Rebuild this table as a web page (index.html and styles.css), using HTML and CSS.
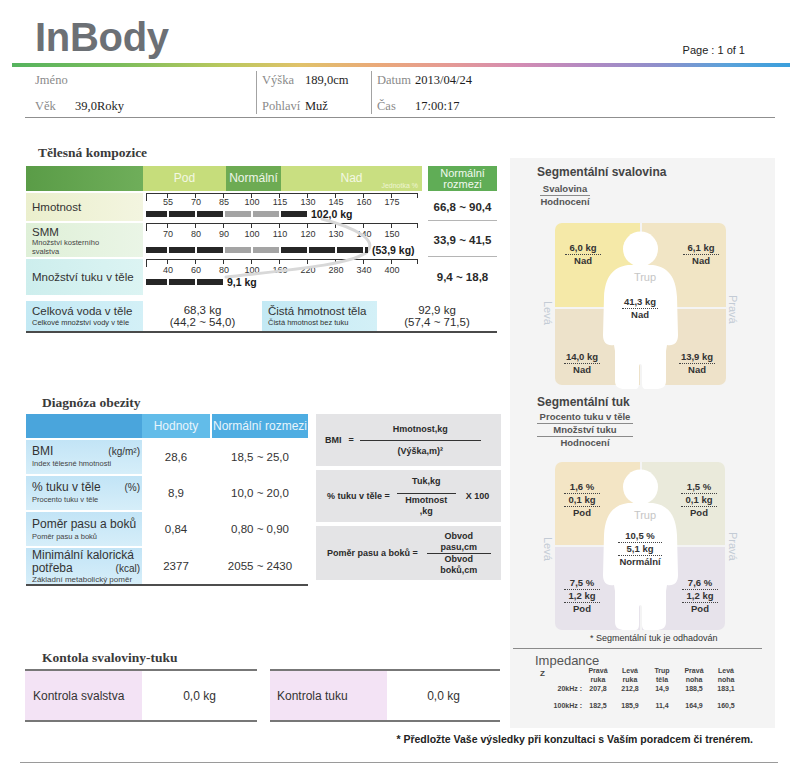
FILE: index.html
```html
<!DOCTYPE html>
<html lang="cs">
<head>
<meta charset="utf-8">
<title>InBody</title>
<link rel="stylesheet" href="styles.css">
</head>
<body>
<div class="page">
  <header class="top">
    <div class="logo">InBody</div>
    <div class="pageno">Page : 1 of 1</div>
  </header>
  <div class="rainbow"></div>
  <div class="info">
    <div class="icol c1">
      <div class="irow"><span class="lab">Jméno</span><span class="val"></span></div>
      <div class="irow"><span class="lab">Věk</span><span class="val">39,0Roky</span></div>
    </div>
    <div class="isep"></div>
    <div class="icol c2">
      <div class="irow"><span class="lab">Výška</span><span class="val">189,0cm</span></div>
      <div class="irow"><span class="lab">Pohlaví</span><span class="val">Muž</span></div>
    </div>
    <div class="isep"></div>
    <div class="icol c3">
      <div class="irow"><span class="lab">Datum</span><span class="val">2013/04/24</span></div>
      <div class="irow"><span class="lab">Čas</span><span class="val">17:00:17</span></div>
    </div>
  </div>

  <div class="main">
    <div class="left">
      <h2 class="stitle t1">Tělesná kompozice</h2>
      <div class="bc">
        <div class="bc-h0"></div>
        <div class="bc-hs">
          <div class="hs-pod">Pod</div>
          <div class="hs-norm">Normální</div>
          <div class="hs-nad">Nad<span class="unit">Jednotka %</span></div>
        </div>
        <div class="bc-hr">Normální<br>rozmezi</div>

        <div class="bl l1"><div class="bl-main">Hmotnost</div></div>
        <div class="scale r1">
          <div class="ticks"><span>55</span><span>70</span><span>85</span><span>100</span><span>115</span><span>130</span><span>145</span><span>160</span><span>175</span></div>
          <div class="barrow"><i class="seg"></i><i class="seg"></i><i class="seg"></i><i class="seg g"></i><i class="seg g"></i><i class="seg"></i><span class="bval">102,0 kg</span></div>
        </div>
        <div class="rng rb">66,8 ~ 90,4</div>

        <div class="bl l2"><div class="bl-main smm">SMM</div><div class="bl-sub">Množství kosterního<br>svalstva</div></div>
        <div class="scale r2">
          <div class="ticks"><span>70</span><span>80</span><span>90</span><span>100</span><span>110</span><span>120</span><span>130</span><span>140</span><span>150</span></div>
          <div class="barrow"><i class="seg"></i><i class="seg"></i><i class="seg"></i><i class="seg g"></i><i class="seg g"></i><i class="seg"></i><i class="seg"></i><i class="seg"></i><i class="seg s"></i><span class="bval">(53,9 kg)</span></div>
        </div>
        <div class="rng rb">33,9 ~ 41,5</div>

        <div class="bl l3"><div class="bl-main">Množství tuku v těle</div></div>
        <div class="scale r3">
          <div class="ticks"><span>40</span><span>60</span><span>80</span><span>100</span><span>160</span><span>220</span><span>280</span><span>340</span><span>400</span></div>
          <div class="barrow"><i class="seg"></i><i class="seg"></i><i class="seg"></i><span class="bval">9,1 kg</span></div>
        </div>
        <div class="rng">9,4 ~ 18,8</div>

        <svg class="stroke" width="471" height="129" viewBox="0 0 471 129"><path d="M296 53 C330 62 352 74 341 86 C325 99 262 104 200 111" fill="none" stroke="#d8d8d8" stroke-width="3" stroke-linecap="round"/></svg>
      </div>

      <div class="bcw">
        <div class="wl"><div class="wl-main">Celková voda v těle</div><div class="wl-sub">Celkové množství vody v těle</div></div>
        <div class="wv"><span>68,3 kg</span><span>(44,2 ~ 54,0)</span></div>
        <div class="wl"><div class="wl-main">Čistá hmotnost těla</div><div class="wl-sub">Čistá hmotnost bez tuku</div></div>
        <div class="wv"><span>92,9 kg</span><span>(57,4 ~ 71,5)</span></div>
      </div>

      <h2 class="stitle t2">Diagnóza obezity</h2>
      <div class="diag">
        <div class="dt">
          <div class="dh0"></div>
          <div class="dh1">Hodnoty</div>
          <div class="dh2">Normální rozmezi</div>

          <div class="dl p4"><div class="dl-main"><span>BMI</span><span class="unitx">(kg/m²)</span></div><div class="dl-sub">Index tělesné hmotnosti</div></div>
          <div class="dv">28,6</div>
          <div class="dv dv2">18,5 ~ 25,0</div>

          <div class="dl p4"><div class="dl-main"><span>% tuku v těle</span><span class="unitx">(%)</span></div><div class="dl-sub">Procento tuku v těle</div></div>
          <div class="dv">8,9</div>
          <div class="dv dv2">10,0 ~ 20,0</div>

          <div class="dl p5"><div class="dl-main"><span>Poměr pasu a boků</span></div><div class="dl-sub">Poměr pasu a boků</div></div>
          <div class="dv">0,84</div>
          <div class="dv dv2">0,80 ~ 0,90</div>

          <div class="dl p1"><div class="dl-main tight"><span>Minimální kalorická</span></div><div class="dl-main tight"><span>potřeba</span><span class="unitx">(kcal)</span></div><div class="dl-sub cut">Základní metabolický poměr</div></div>
          <div class="dv">2377</div>
          <div class="dv dv2">2055 ~ 2430</div>
        </div>

        <div class="fm">
          <div class="fbox f1">
            <span>BMI</span><span class="eq">=</span>
            <div class="frac fr1"><span class="num">Hmotnost,kg</span><span class="den">(Výška,m)²</span></div>
          </div>
          <div class="fbox f2">
            <span>% tuku v těle =</span>
            <div class="frac fr2"><span class="num">Tuk,kg</span><span class="den">Hmotnost<br>,kg</span></div>
            <span class="x100">X 100</span>
          </div>
          <div class="fbox f3">
            <span>Poměr pasu a boků =</span>
            <div class="frac fr3"><span class="num">Obvod<br>pasu,cm</span><span class="den">Obvod<br>boků,cm</span></div>
          </div>
        </div>
      </div>

      <h2 class="stitle t3">Kontola svaloviny-tuku</h2>
      <div class="kc">
        <div class="kbox k1"><div class="klab">Kontrola svalstva</div><div class="kval">0,0 kg</div></div>
        <div class="kbox k2"><div class="klab">Kontrola tuku</div><div class="kval">0,0 kg</div></div>
      </div>
    </div>

    <aside class="right">
      <h3 class="sg-title">Segmentální svalovina</h3>
      <div class="leg leg1"><span class="ul">Svalovina</span><span>Hodnocení</span></div>

      <div class="quad qm">
        <div class="q tl"><div class="ql"><span class="u">6,0 kg</span><span>Nad</span></div></div>
        <div class="q tr"><div class="ql"><span class="u">6,1 kg</span><span>Nad</span></div></div>
        <div class="q bl"><div class="ql"><span class="u">14,0 kg</span><span>Nad</span></div></div>
        <div class="q br"><div class="ql"><span class="u">13,9 kg</span><span>Nad</span></div></div>
        <svg class="fig" width="171" height="166" viewBox="0 0 171 166"><circle cx="85.5" cy="26" r="17.5" fill="#fff"/><path fill="#fff" d="M73 42 C58 44 50 54 49 74 L48 112 C48 120 52 123 59 122 L60 128 L60 158 C60 164 64 166 70 166 L80 166 C83 166 84 164 84 160 L84 144 C84 140 87 140 87 144 L87 160 C87 164 88 166 91 166 L101 166 C107 166 111 164 111 158 L111 128 L112 122 C119 123 123 120 123 112 L122 74 C121 54 113 44 98 42 Z"/></svg>
        <div class="trup tm">Trup</div>
        <div class="ql qc qcm"><span class="u">41,3 kg</span><span>Nad</span></div>
        <div class="side sl slm">Levá</div>
        <div class="side sr srm">Pravá</div>
      </div>

      <h3 class="sg-title t-fat">Segmentální tuk</h3>
      <div class="leg leg2"><span class="ul">Procento tuku v těle</span><span class="ul">Množství tuku</span><span>Hodnocení</span></div>

      <div class="quad qf">
        <div class="q tl"><div class="ql"><span class="u">1,6 %</span><span class="u">0,1 kg</span><span>Pod</span></div></div>
        <div class="q tr"><div class="ql"><span class="u">1,5 %</span><span class="u">0,1 kg</span><span>Pod</span></div></div>
        <div class="q bl"><div class="ql"><span class="u">7,5 %</span><span class="u">1,2 kg</span><span>Pod</span></div></div>
        <div class="q br"><div class="ql"><span class="u">7,6 %</span><span class="u">1,2 kg</span><span>Pod</span></div></div>
        <svg class="fig" width="171" height="168" viewBox="0 0 171 168"><circle cx="85.5" cy="25" r="17.5" fill="#fff"/><path fill="#fff" d="M73 41 C58 43 50 53 49 73 L48 113 C48 121 52 124 59 123 L60 129 L60 160 C60 166 64 168 70 168 L80 168 C83 168 84 166 84 162 L84 146 C84 142 87 142 87 146 L87 162 C87 166 88 168 91 168 L101 168 C107 168 111 166 111 160 L111 129 L112 123 C119 124 123 121 123 113 L122 73 C121 53 113 43 98 41 Z"/></svg>
        <div class="trup tf">Trup</div>
        <div class="ql qc qcf"><span class="u">10,5 %</span><span class="u">5,1 kg</span><span>Normální</span></div>
        <div class="side sl slf">Levá</div>
        <div class="side sr srf">Pravá</div>
      </div>

      <p class="note">* Segmentální tuk je odhadován</p>
      <div class="imp-hr"></div>
      <h3 class="imp-title">Impedance</h3>
      <div class="imp">
        <div class="iz">Z</div>
        <div>Pravá<br>ruka</div>
        <div>Levá<br>ruka</div>
        <div>Trup<br>těla</div>
        <div>Pravá<br>noha</div>
        <div>Levá<br>noha</div>

        <div class="ik a1">20kHz :</div>
        <div class="a1">207,8</div>
        <div class="a1">212,8</div>
        <div class="a1">14,9</div>
        <div class="a1">188,5</div>
        <div class="a1">183,1</div>

        <div class="ik a2">100kHz :</div>
        <div class="a2">182,5</div>
        <div class="a2">185,9</div>
        <div class="a2">11,4</div>
        <div class="a2">164,9</div>
        <div class="a2">160,5</div>
      </div>
    </aside>
  </div>

  <p class="foot">* Předložte Vaše výsledky při konzultaci s Vaším poradcem či trenérem.</p>
  <div class="endline"></div>
</div>
</body>
</html>
```

FILE: styles.css
```css
* { box-sizing: border-box; margin: 0; padding: 0; }
html, body { width: 800px; height: 784px; overflow: hidden; background: #fff; }
body { font-family: "Liberation Sans", Arial, sans-serif; color: #333; }
.page { position: relative; width: 800px; height: 784px; }

/* header */
.top { display: flex; justify-content: space-between; height: 63px; padding: 17px 55px 0 35px; }
.logo { font-size: 40px; line-height: 40px; font-weight: 700; color: #6c7075; letter-spacing: -0.3px; }
.pageno { font-size: 11px; line-height: 13px; margin-top: 27px; color: #222; }
.rainbow {
  height: 4px; margin: 0 10px 0 12px;
  background: linear-gradient(to right, #55b35e 0%, #7dbd5c 14%, #b9c85e 27%, #e0c26a 37%, #eaa979 47%, #e59a94 56%, #d48cb2 65%, #b289c2 74%, #8f8fcb 83%, #5aa2da 92%, #3a9fdc 100%);
}
.info {
  display: flex; height: 51px; margin: 0 25px; border-bottom: 1px solid #8f8f8f;
  font-family: "Liberation Serif", "Times New Roman", serif; font-size: 12.5px;
}
.icol { display: flex; flex-direction: column; gap: 4px; padding-top: 2px; }
.irow { display: flex; line-height: 22px; }
.lab { color: #8a8a8a; }
.val { color: #1e1e1e; }
.c1 { width: 231px; padding-left: 10px; }
.c1 .lab { width: 40px; }
.c2 { width: 114px; padding-left: 5px; }
.c2 .lab { width: 43px; }
.c3 { padding-left: 5px; }
.c3 .lab { width: 38px; }
.isep { width: 1px; background: #a3a3a3; margin: 4px 0 3px; }

/* main layout */
.main { display: flex; align-items: flex-start; gap: 8px; padding-left: 26px; }
.left { width: 476px; }
.stitle { font-family: "Liberation Serif", "Times New Roman", serif; font-weight: 700; font-size: 13.5px; line-height: 16px; color: #3a3a3a; }
.t1 { margin: 27px 0 5px 12px; }
.t2 { margin: 62px 0 3px 16px; }
.t3 { margin: 64px 0 3px 16px; }

/* body composition */
.bc {
  position: relative; display: grid; width: 471px;
  grid-template-columns: 117px 279px 75px; grid-template-rows: 25px 28px 34px 36px;
  row-gap: 2px;
}
.bc-h0 { background: linear-gradient(to right, #5a9c47, #6fae5a); }
.bc-hs { display: flex; color: #f3f8e3; font-size: 12px; line-height: 25px; text-align: center; }
.hs-pod { width: 83px; background: #c6dd7b; }
.hs-norm { width: 55px; background: #6dab53; color: #eef6e8; }
.hs-nad { flex: 1; position: relative; background: #c9df81; }
.unit { position: absolute; right: 4px; bottom: 1px; font-size: 7px; line-height: 9px; color: #eef5d2; }
.bc-hr { margin-left: 6px; background: #60ad56; color: #f2f9ef; font-size: 11px; line-height: 11px; text-align: center; padding-top: 2px; }

.bl { padding-left: 6px; overflow: hidden; }
.l1 { background: linear-gradient(to right, #ebefcd, #f3f5e0); display: flex; align-items: center; }
.l2 { background: linear-gradient(to right, #dff0d8, #eaf5e6); padding-top: 2px; }
.l3 { background: linear-gradient(to right, #cdeeed, #dcf4f3); display: flex; align-items: center; }
.bl-main { font-size: 11.5px; color: #333; }
.smm { line-height: 14px; }
.bl-sub { font-size: 7.5px; line-height: 8.5px; color: #444; }

.scale {
  position: relative; margin-left: 3px; width: 272px; border-top: 1px solid #333; padding-top: 3px;
  background-image: repeating-linear-gradient(to right, transparent 0, transparent 21px, #333 21px, #333 22px, transparent 22px, transparent 28px);
  background-size: 100% 4px; background-repeat: no-repeat;
}
.scale::before { content: ""; position: absolute; left: 0; top: 0; width: 1px; height: 7px; background: #333; }
.scale::after { content: ""; position: absolute; right: 0; top: 0; width: 1px; height: 4px; background: #333; }
.r2, .r3 { padding-top: 5px; }
.r2 .barrow { margin-top: 4px; }
.ticks { display: flex; padding-left: 8px; font-size: 9px; line-height: 11px; color: #333; }
.ticks span { width: 28px; text-align: center; }
.barrow { position: relative; z-index: 1; display: flex; align-items: center; gap: 2px; height: 12px; }
.seg { display: block; width: 26px; height: 6px; background: #262626; }
.seg:first-child { width: 21px; }
.seg.g { background: #a4a4a4; }
.seg.s { width: 3px; }
.bval { margin-left: 2px; font-size: 10.5px; font-weight: 700; line-height: 12px; color: #1a1a1a; white-space: nowrap; }
.rng { margin-left: 6px; display: flex; align-items: center; justify-content: center; font-size: 11.5px; font-weight: 700; color: #2a2a2a; }
.rb { border-bottom: 1px solid #b5b5b5; }
.stroke { position: absolute; left: 0; top: 0; pointer-events: none; }

.bcw { display: grid; grid-template-columns: 117px 119px 115px 120px; width: 471px; height: 32px; margin-top: 6px; border-bottom: 2px solid #4a4a4a; }
.wl { background: linear-gradient(to right, #c3e9f4, #d3f0f7); padding: 3px 0 0 6px; overflow: hidden; }
.wl-main { font-size: 11.5px; line-height: 14px; }
.wl-sub { font-size: 7.5px; line-height: 9px; white-space: nowrap; }
.wv { display: flex; flex-direction: column; justify-content: center; align-items: center; font-size: 11.5px; line-height: 12px; color: #2e2e2e; }

/* obesity diagnosis */
.diag { display: flex; gap: 8px; }
.dt {
  display: grid; width: 282px; grid-template-columns: 116px 68px 98px;
  grid-template-rows: 24px 34px 34px 34px 36px; row-gap: 2px; border-bottom: 2px solid #4d4d4d;
}
.dh0 { background: #4aa5dc; }
.dh1, .dh2 { color: #e8f5fc; font-size: 12px; line-height: 24px; text-align: center; }
.dh1 { background: #62bce9; }
.dh2 { background: #4eade2; border-left: 2px solid #fff; }
.dl { background: linear-gradient(to bottom, #c2e4f6, #d6eef9); padding: 4px 2px 0 6px; overflow: hidden; }
.p5 { padding-top: 5px; }
.p1 { padding-top: 1px; }
.dl-main { display: flex; justify-content: space-between; align-items: baseline; font-size: 12px; line-height: 15px; color: #333; }
.dl-main.tight { line-height: 13px; }
.unitx { font-size: 10px; }
.dl-sub { font-size: 7.5px; line-height: 9px; color: #444; white-space: nowrap; }
.dl-sub.cut { line-height: 10px; font-size: 8px; }
.dv { display: flex; align-items: center; justify-content: center; font-size: 11.5px; color: #333; }
.dv2 { padding-left: 2px; }

.fm { width: 185px; display: flex; flex-direction: column; gap: 4px; }
.fbox { display: flex; align-items: center; background: #e4e4e6; font-size: 9px; font-weight: 700; color: #2a2a2a; }
.f1 { height: 52px; padding-left: 9px; }
.f2 { height: 52px; padding-left: 11px; }
.f3 { height: 54px; padding-left: 11px; }
.eq { margin: 0 6px 0 7px; }
.frac { display: flex; flex-direction: column; text-align: center; line-height: 11px; }
.num { border-bottom: 1px solid #333; }
.fr1 { width: 121px; }
.fr1 .num { padding-bottom: 5px; }
.fr1 .den { padding-top: 5px; }
.fr2 { width: 59px; margin-left: 7px; }
.fr2 .num { padding-bottom: 6px; }
.fr2 .den { padding-top: 1px; }
.x100 { margin-left: 10px; }
.fr3 { width: 64px; margin-left: 9px; }

/* control */
.kc { display: flex; gap: 13px; margin-left: -1px; }
.kbox { height: 53px; border-top: 2px solid #777; border-bottom: 2px solid #777; display: grid; grid-template-columns: 117px 1fr; font-size: 12px; color: #333; }
.k1 { width: 232px; }
.k2 { width: 230px; }
.klab { display: flex; align-items: center; background: #f3e3f5; padding-left: 8px; }
.k2 .klab { padding-left: 7px; }
.kval { display: flex; align-items: center; justify-content: center; }

/* right panel */
.right { width: 265px; height: 570px; margin-top: 40px; background: #f4f4f4; padding-top: 6px; }
.sg-title { font-size: 12px; font-weight: 700; line-height: 16px; color: #444; padding-left: 27px; }
.t-fat { margin-top: 9px; }
.leg { font-size: 9.5px; font-weight: 700; line-height: 12px; text-align: center; color: #555; }
.leg span { display: block; }
.leg .ul { border-bottom: 1px solid #8a8a8a; }
.leg1 { width: 50px; margin: 3px 0 0 30px; }
.leg2 { width: 96px; margin: 1px 0 0 27px; }

.quad { position: relative; display: grid; column-gap: 2px; row-gap: 2px; margin-left: 45px; }
.qm { width: 171px; grid-template-columns: 85px 84px; grid-template-rows: 84px 76px; margin-top: 15px; }
.qf { width: 170px; grid-template-columns: 85px 83px; grid-template-rows: 83px 83px; margin-top: 13px; }
.q { display: flex; align-items: flex-start; }
.q.tl { border-top-left-radius: 7px; }
.q.tr { border-top-right-radius: 7px; justify-content: flex-end; }
.q.bl { border-bottom-left-radius: 7px; align-items: flex-end; }
.q.br { border-bottom-right-radius: 7px; align-items: flex-end; justify-content: flex-end; }
.qm .tl { background: #f5e9a8; padding: 19px 0 0 10px; }
.qm .tr { background: #f1e5c5; padding: 19px 7px 0 0; }
.qm .bl { background: #ede2ca; padding: 0 0 9px 9px; }
.qm .br { background: #eee2c9; padding: 0 11px 9px 0; }
.qf .tl { background: #f3e5c5; padding: 19px 0 0 9px; }
.qf .tr { background: #eaeadb; padding: 19px 8px 0 0; }
.qf .bl { background: #e7e3eb; padding: 0 0 15px 9px; }
.qf .br { background: #e7e3eb; padding: 0 7px 15px 0; }
.ql { width: 36px; font-size: 9.5px; font-weight: 700; line-height: 12px; text-align: center; color: #333; }
.ql span { display: block; white-space: nowrap; }
.ql .u { border-bottom: 1px dotted #444; }
.fig { position: absolute; left: 0; top: 0; z-index: 1; }
.qc { position: absolute; z-index: 2; }
.qcm { left: 67px; top: 73px; }
.qcf { width: 44px; left: 63px; top: 68px; }
.trup { position: absolute; z-index: 2; width: 30px; left: 75px; text-align: center; font-size: 11px; line-height: 12px; color: #c6c6c6; }
.tm { top: 48px; }
.tf { top: 47px; }
.side { position: absolute; writing-mode: vertical-rl; font-size: 11px; line-height: 12px; color: #c3cbd5; }
.sl { left: -13px; }
.sr { left: 172px; }
.slm { top: 78px; }
.srm { top: 72px; }
.slf { top: 75px; }
.srf { top: 70px; }

.note { font-size: 9px; line-height: 12px; margin-top: 2px; padding-left: 80px; color: #333; }
.imp-hr { margin: 4px 13px 0 3px; border-top: 1px solid #8a8a8a; }
.imp-title { font-size: 13px; font-weight: 400; line-height: 15px; margin-top: 4px; padding-left: 25px; color: #555; }
.imp {
  display: grid; grid-template-columns: 47px repeat(5, 32px); grid-template-rows: 18px 13px 13px;
  margin: -2px 0 0 25px; font-size: 7px; font-weight: 700; line-height: 9px; text-align: center; color: #444;
}
.iz { text-align: left; padding: 3px 0 0 5px; font-size: 8px; }
.ik { text-align: right; }
.a1 { align-self: start; }
.a2 { align-self: end; }

/* footer */
.foot { margin-top: 4px; padding-right: 47px; text-align: right; font-size: 10.5px; font-weight: 700; line-height: 14px; color: #222; }
.endline { margin: 16px 22px 0 20px; border-top: 1px solid #9a9a9a; }
```
